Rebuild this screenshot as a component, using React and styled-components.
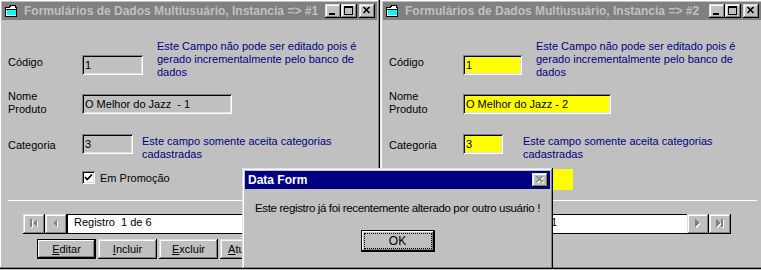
import React from "react";
import styled, { createGlobalStyle, css } from "styled-components";

const GlobalStyle = createGlobalStyle`
  html, body {
    margin: 0;
    padding: 0;
    background: #c0c0c0;
  }
  body {
    font-family: "Liberation Sans", Arial, sans-serif;
    font-size: 11px;
    color: #000;
    overflow: hidden;
  }
`;

// classic 3d bevels
const raised = css`
  box-shadow: inset -1px -1px #000, inset 1px 1px #dfdfdf,
    inset -2px -2px #808080, inset 2px 2px #fff;
`;
const sunken = css`
  box-shadow: inset 1px 1px #808080, inset -1px -1px #fff,
    inset 2px 2px #000, inset -2px -2px #dfdfdf;
`;

const Desktop = styled.div`
  position: relative;
  width: 761px;
  height: 270px;
  overflow: hidden;
  display: flex;
  align-items: flex-start;
`;

const Window = styled.div`
  flex: none;
  width: ${(p) => p.$w}px;
  height: 270px;
  margin-top: -1px;
  margin-left: ${(p) => p.$ml || 0}px;
  padding: 3px;
  box-sizing: border-box;
  background: #c0c0c0;
  ${raised}
  display: flex;
  flex-direction: column;
`;

const TitleBar = styled.div`
  flex: none;
  height: 18px;
  display: flex;
  align-items: center;
  padding: 0 2px;
  background: ${(p) => (p.$active ? "#000080" : "#808080")};
  color: ${(p) => (p.$active ? "#fff" : "#c0c0c0")};
  font-family: "Liberation Sans", Arial, sans-serif;
  font-weight: bold;
  font-size: 12px;
  letter-spacing: 0;
  white-space: nowrap;
`;

const TitleText = styled.span`
  margin-left: ${(p) => p.$ml || 0}px;
`;

const Spacer = styled.div`
  flex: 1;
`;

const CaptionButton = styled.div`
  flex: none;
  width: 16px;
  height: 14px;
  margin-left: ${(p) => p.$gap || 0}px;
  background: #c0c0c0;
  ${raised}
  svg {
    display: block;
  }
`;

const Body = styled.div`
  flex: 1;
  display: flex;
  flex-direction: column;
  padding: 20px 4px 0 6px;
`;

const Row = styled.div`
  display: flex;
  align-items: flex-start;
  margin-top: ${(p) => p.$mt || 0}px;
`;

const Label = styled.div`
  flex: none;
  width: 74px;
  line-height: 13px;
  margin-top: ${(p) => p.$mt || 0}px;
`;

const Field = styled.div`
  flex: none;
  width: ${(p) => p.$w}px;
  height: 20px;
  box-sizing: border-box;
  padding: 4px 0 0 3px;
  line-height: 13px;
  white-space: pre;
  background: ${(p) => p.$bg || "#c0c0c0"};
  margin-top: ${(p) => p.$mt || 0}px;
  ${sunken}
`;

const Help = styled.div`
  color: #000080;
  line-height: 13px;
  white-space: nowrap;
  margin-left: ${(p) => p.$ml || 0}px;
  margin-top: ${(p) => p.$mt || 0}px;
`;

const CheckRow = styled.div`
  display: flex;
  align-items: flex-start;
  width: ${(p) => p.$w}px;
  height: 21px;
  margin: 8px 0 0 74px;
  background: ${(p) => p.$bg || "transparent"};
`;

const Box = styled.div`
  flex: none;
  width: 13px;
  height: 13px;
  margin-top: 2px;
  background: #fff;
  ${sunken}
  svg {
    display: block;
  }
`;

const CheckLabel = styled.span`
  margin: 3px 0 0 5px;
  line-height: 13px;
`;

const Divider = styled.div`
  height: 1px;
  margin-top: 10px;
  background: #fff;
`;

const NavBar = styled.div`
  display: flex;
  margin: 13px 0 0 15px;
`;

const NavButton = styled.div`
  flex: none;
  width: 22px;
  height: 20px;
  display: flex;
  align-items: center;
  justify-content: center;
  background: #c0c0c0;
  ${raised}
`;

const NavField = styled.div`
  flex: none;
  width: 239px;
  height: 20px;
  box-sizing: border-box;
  border: 1px solid #000;
  border-right: none;
  background: #fff;
  line-height: 14px;
  padding-left: ${(p) => 6 + (p.$indent || 0)}px;
  white-space: pre;
`;

const ButtonRow = styled.div`
  display: flex;
  gap: 2px;
  margin: 5px 0 0 29px;
`;

const PushButton = styled.div`
  flex: none;
  width: ${(p) => p.$w || 59}px;
  height: ${(p) => p.$h || 20}px;
  margin-top: ${(p) => p.$mt || 0}px;
  box-sizing: border-box;
  display: flex;
  align-items: center;
  justify-content: center;
  background: #c0c0c0;
  ${(p) =>
    p.$default
      ? css`
          box-shadow: inset 0 0 0 1px #000, inset -2px -2px #000,
            inset 2px 2px #fff, inset -3px -3px #808080;
        `
      : raised}
`;

const Dialog = styled.div`
  position: absolute;
  left: 242px;
  top: 168px;
  width: 311px;
  height: 101px;
  box-sizing: border-box;
  padding: 3px;
  background: #c0c0c0;
  ${raised}
  display: flex;
  flex-direction: column;
  align-items: stretch;
`;

const DialogBody = styled.div`
  display: flex;
  flex-direction: column;
  align-items: center;
  font-size: 11.5px;
  letter-spacing: -0.35px;
`;

const Message = styled.div`
  margin-top: 12px;
  line-height: 15px;
  white-space: nowrap;
`;

const FocusRect = styled.div`
  width: 68px;
  height: 16px;
  box-sizing: border-box;
  border: 1px dotted #000;
  display: flex;
  align-items: center;
  justify-content: center;
  font-size: 12px;
  letter-spacing: 0;
`;

const WinIcon = () => (
  <svg width="14" height="14" viewBox="0 0 14 14" shapeRendering="crispEdges">
    <path d="M1.5 3.5h4l1-2h5v2h1v9h-11z" fill="#fff" stroke="#000" />
    <rect x="3" y="6" width="9" height="5" fill="#00ffff" />
    <rect x="2" y="5" width="10" height="1" fill="#000" />
  </svg>
);

const MinGlyph = () => (
  <svg width="16" height="14" viewBox="0 0 16 14" shapeRendering="crispEdges">
    <rect x="4" y="9" width="6" height="2" fill="#000" />
  </svg>
);

const MaxGlyph = () => (
  <svg width="16" height="14" viewBox="0 0 16 14" shapeRendering="crispEdges">
    <rect x="3" y="2" width="9" height="9" fill="#000" />
    <rect x="4" y="4" width="7" height="6" fill="#c0c0c0" />
  </svg>
);

const CloseGlyph = ({ disabled }) => (
  <svg width="16" height="14" viewBox="0 0 16 14">
    {disabled && (
      <path d="M5.5 4l6 6M11.5 4l-6 6" stroke="#fff" strokeWidth="1.6" />
    )}
    <path
      d="M4.5 3l6 6M10.5 3l-6 6"
      stroke={disabled ? "#808080" : "#000"}
      strokeWidth="1.6"
    />
  </svg>
);

const arrowShapes = {
  first: (
    <>
      <rect x="0" y="0" width="2" height="8" />
      <polygon points="7,0 7,8 3,4" />
    </>
  ),
  prev: <polygon points="5,0 5,8 1,4" />,
  next: <polygon points="1,0 1,8 5,4" />,
  last: (
    <>
      <polygon points="0,0 0,8 4,4" />
      <rect x="5" y="0" width="2" height="8" />
    </>
  ),
};

const NavArrow = ({ kind }) => (
  <svg width="9" height="10" viewBox="0 0 9 10" shapeRendering="crispEdges">
    <g fill="#fff" transform="translate(1,1)">
      {arrowShapes[kind]}
    </g>
    <g fill="#808080">{arrowShapes[kind]}</g>
  </svg>
);

const CheckMark = () => (
  <svg width="13" height="13" viewBox="0 0 13 13">
    <polyline points="3,6 5.2,8.5 10,3.5" fill="none" stroke="#000" strokeWidth="1.8" />
  </svg>
);

const Accel = ({ text }) => (
  <span>
    <u>{text[0]}</u>
    {text.slice(1)}
  </span>
);

const DataWindow = ({ n, w, ml, edit, navText, navIndent, buttons }) => {
  const bg = edit ? "#ffff00" : "#c0c0c0";
  return (
    <Window $w={w} $ml={ml}>
      <TitleBar>
        <WinIcon />
        <TitleText $ml={6}>
          Formulários de Dados Multiusuário, Instancia =&gt; #{n}
        </TitleText>
        <Spacer />
        <CaptionButton>
          <MinGlyph />
        </CaptionButton>
        <CaptionButton>
          <MaxGlyph />
        </CaptionButton>
        <CaptionButton $gap={2}>
          <CloseGlyph />
        </CaptionButton>
      </TitleBar>
      <Body>
        <Row>
          <Label $mt={16}>Código</Label>
          <Field $w={edit ? 59 : 61} $mt={15} $bg={bg}>
            1
          </Field>
          <Help $ml={14}>
            Este Campo não pode ser editado pois é
            <br />
            gerado incrementalmente pelo banco de
            <br />
            dados
          </Help>
        </Row>
        <Row $mt={11}>
          <Label>
            Nome
            <br />
            Produto
          </Label>
          <Field $w={edit ? 148 : 150} $mt={4} $bg={bg}>
            {edit ? "O Melhor do Jazz - 2" : "O Melhor do Jazz  - 1"}
          </Field>
        </Row>
        <Row $mt={18}>
          <Label $mt={5}>Categoria</Label>
          <Field $w={edit ? 40 : 51} $bg={bg}>
            3
          </Field>
          <Help $ml={edit ? 20 : 9} $mt={1}>
            Este campo somente aceita categorias
            <br />
            cadastradas
          </Help>
        </Row>
        <CheckRow $w={edit ? 110 : 100} $bg={edit ? "#ffff00" : undefined}>
          <Box>
            <CheckMark />
          </Box>
          <CheckLabel>Em Promoção</CheckLabel>
        </CheckRow>
        <Divider />
        <NavBar>
          <NavButton>
            <NavArrow kind="first" />
          </NavButton>
          <NavButton>
            <NavArrow kind="prev" />
          </NavButton>
          <NavField $indent={navIndent}>{navText}</NavField>
          <NavButton>
            <NavArrow kind="next" />
          </NavButton>
          <NavButton>
            <NavArrow kind="last" />
          </NavButton>
        </NavBar>
        <ButtonRow>
          {buttons.map((b, i) => (
            <PushButton key={b} $default={i === 0}>
              <Accel text={b} />
            </PushButton>
          ))}
        </ButtonRow>
      </Body>
    </Window>
  );
};

export default function App() {
  return (
    <>
      <GlobalStyle />
      <Desktop>
        <DataWindow
          n={1}
          w={381}
          ml={-1}
          navText="Registro  1 de 6"
          buttons={["Editar", "Incluir", "Excluir", "Atualizar", "Fechar"]}
        />
        <DataWindow
          n={2}
          w={384}
          edit
          navText="Registro  1"
          navIndent={49}
          buttons={["Atualizar", "Cancelar"]}
        />
        <Dialog>
          <TitleBar $active>
            <TitleText $ml={1}>Data Form</TitleText>
            <Spacer />
            <CaptionButton>
              <CloseGlyph disabled />
            </CaptionButton>
          </TitleBar>
          <DialogBody>
            <Message>
              Este registro já foi recentemente alterado por outro usuário !
            </Message>
            <PushButton $default $w={74} $h={22} $mt={14}>
              <FocusRect>OK</FocusRect>
            </PushButton>
          </DialogBody>
        </Dialog>
      </Desktop>
    </>
  );
}
